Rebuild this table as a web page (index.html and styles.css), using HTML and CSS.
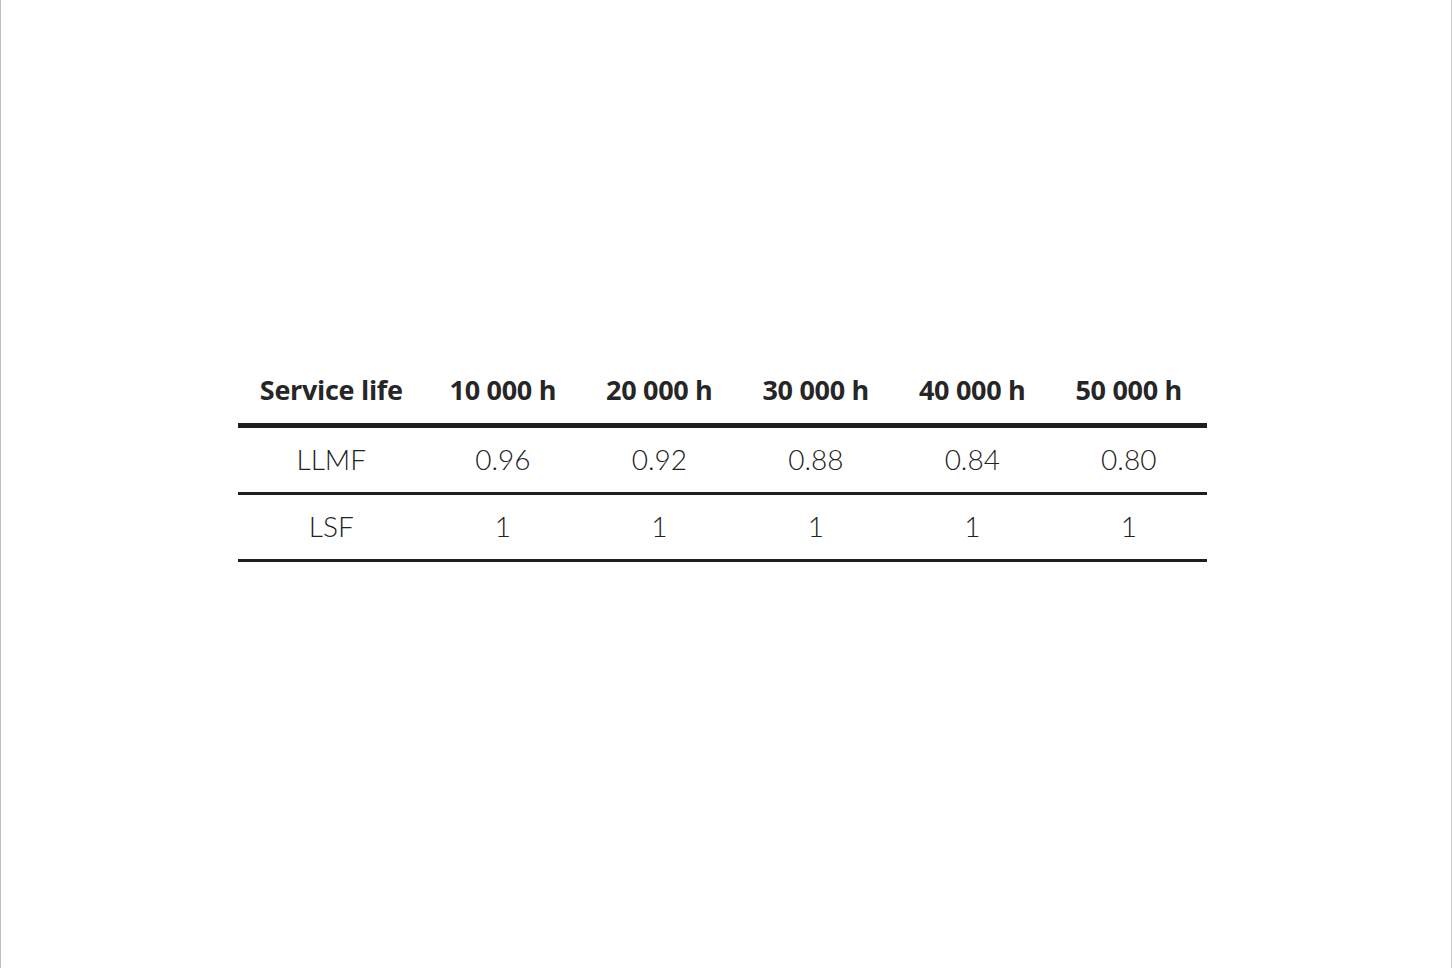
FILE: index.html
```html
<!DOCTYPE html>
<html>
<head>
<meta charset="utf-8">
<link rel="stylesheet" href="styles.css">
</head>
<body>
<div class="page">
  <table class="life">
    <thead>
      <tr>
        <th class="first">Service life</th>
        <th>10 000 h</th>
        <th>20 000 h</th>
        <th>30 000 h</th>
        <th>40 000 h</th>
        <th>50 000 h</th>
      </tr>
    </thead>
    <tbody>
      <tr>
        <td>LLMF</td><td>0.96</td><td>0.92</td><td>0.88</td><td>0.84</td><td>0.80</td>
      </tr>
      <tr>
        <td>LSF</td><td>1</td><td>1</td><td>1</td><td>1</td><td>1</td>
      </tr>
    </tbody>
  </table>
</div>
</body>
</html>
```
FILE: styles.css
```css
html, body {
  margin: 0;
  padding: 0;
  background: #fff;
}
.page {
  box-sizing: border-box;
  width: 1452px;
  height: 968px;
  border-left: 1px solid #bdbdbd;
  border-right: 1px solid #d0d0d0;
  padding: 371px 0 0 237px;
}
.life {
  border-collapse: collapse;
  width: 969px;
  table-layout: fixed;
  color: #222;
}
.life th {
  font-family: "Open Sans", sans-serif;
  font-weight: 700;
  font-size: 27px;
  line-height: 37px;
  letter-spacing: -0.3px;
  height: 52px;
  padding: 0;
  vertical-align: top;
  border-bottom: 5px solid #1e1e1e;
  width: 156px;
  text-align: center;
  color: #262626;
}
.life th.first {
  width: 186px;
}
.life td {
  font-family: Lato, sans-serif;
  font-weight: 300;
  font-size: 28px;
  text-align: center;
  padding: 0 0 3px 0;
  height: 61px;
  border-bottom: 3px solid #1e1e1e;
  color: #222;
}
```
